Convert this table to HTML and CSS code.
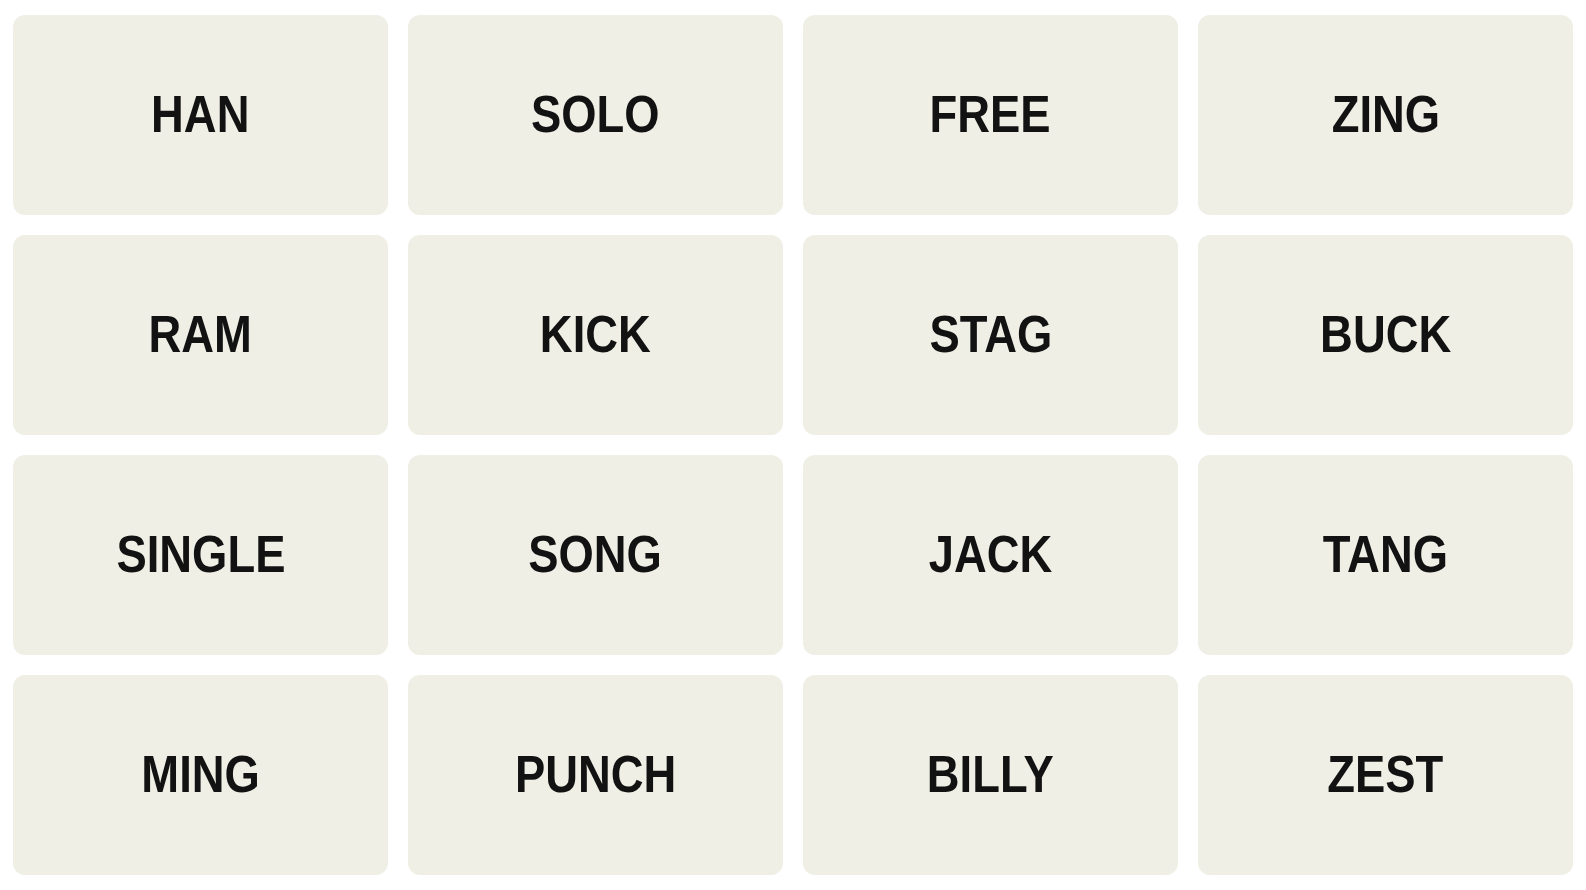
FILE: index.html
```html
<!DOCTYPE html>
<html>
<head>
<meta charset="utf-8">
<link rel="stylesheet" href="styles.css">
</head>
<body>
<div class="board">
  <div class="tile"><span class="word">HAN</span></div>
  <div class="tile"><span class="word">SOLO</span></div>
  <div class="tile"><span class="word">FREE</span></div>
  <div class="tile"><span class="word">ZING</span></div>
  <div class="tile"><span class="word">RAM</span></div>
  <div class="tile"><span class="word">KICK</span></div>
  <div class="tile"><span class="word">STAG</span></div>
  <div class="tile"><span class="word">BUCK</span></div>
  <div class="tile"><span class="word">SINGLE</span></div>
  <div class="tile"><span class="word">SONG</span></div>
  <div class="tile"><span class="word">JACK</span></div>
  <div class="tile"><span class="word">TANG</span></div>
  <div class="tile"><span class="word">MING</span></div>
  <div class="tile"><span class="word">PUNCH</span></div>
  <div class="tile"><span class="word">BILLY</span></div>
  <div class="tile"><span class="word">ZEST</span></div>
</div>
</body>
</html>
```
FILE: styles.css
```css
html, body {
  margin: 0;
  padding: 0;
  background: #ffffff;
}
.board {
  display: grid;
  grid-template-columns: repeat(4, 375px);
  grid-template-rows: repeat(4, 200px);
  gap: 20px;
  padding: 15px 13px;
}
.tile {
  background: #efefe6;
  border-radius: 12px;
  display: flex;
  align-items: center;
  justify-content: center;
  padding-bottom: 2px;
  font-family: "Liberation Sans", Arial, sans-serif;
  font-weight: 700;
  font-size: 51px;
  line-height: 1;
  color: #121212;
  text-transform: uppercase;
}
.word {
  display: inline-block;
  transform: scaleX(0.89);
}
```
